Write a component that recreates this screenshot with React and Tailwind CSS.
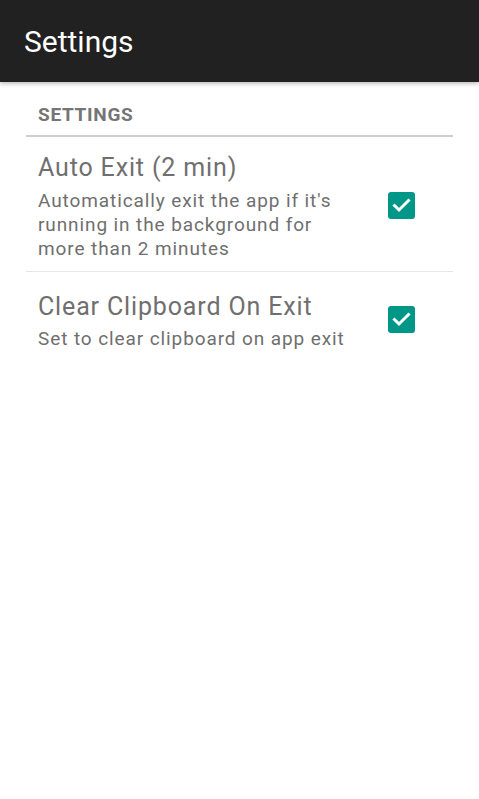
import React from "react";

function Check() {
  return (
    <div className="w-[27px] h-[27px] rounded-[3px] bg-[#009688] flex items-center justify-center shrink-0">
      <svg width="27" height="27" viewBox="0 0 27 27">
        <polyline points="6.5,13.5 11,18 20.5,8.5" fill="none" stroke="#ffffff" strokeWidth="3" strokeLinecap="square" />
      </svg>
    </div>
  );
}

function Item({ title, summary, border, pt, pb }) {
  return (
    <div className={`flex items-center px-3 ${pt} ${pb} ${border ? "border-b border-[#e6e6e6]" : ""}`}>
      <div className="w-[317px]">
        <div className="text-[25px] leading-[30px] tracking-[0.85px] text-[#6f6f6f] whitespace-nowrap">{title}</div>
        <div className="mt-[5.5px] text-[19px] leading-[24px] tracking-[0.9px] text-[#6f6f6f]">{summary}</div>
      </div>
      <div className="ml-auto mr-[26px] -mt-[3px]">
        <Check />
      </div>
    </div>
  );
}

export default function App() {
  return (
    <div className="w-[479px] h-[799px] bg-white overflow-hidden" style={{ fontFamily: "Roboto, 'Noto Sans', sans-serif" }}>
      <div className="h-[82px] bg-[#212121] flex items-center pl-6 shadow-[0_2px_4px_rgba(0,0,0,0.25)] relative z-10">
        <span className="text-[30px] text-white leading-none mt-[1px]">Settings</span>
      </div>
      <div className="px-[26px]">
        <div className="pt-[20.5px] pb-[8px] px-3 border-b-2 border-[#cdcdcd]">
          <div className="text-[19px] leading-[24px] font-bold tracking-[0.7px] text-[#757575]">SETTINGS</div>
        </div>
        <Item
          title="Auto Exit (2 min)"
          summary="Automatically exit the app if it's running in the background for more than 2 minutes"
          border
          pt="pt-[16.5px]"
          pb="pb-[10px]"
        />
        <Item
          title="Clear Clipboard On Exit"
          summary="Set to clear clipboard on app exit"
          pt="pt-[20px]"
          pb="pb-[10px]"
        />
      </div>
    </div>
  );
}
